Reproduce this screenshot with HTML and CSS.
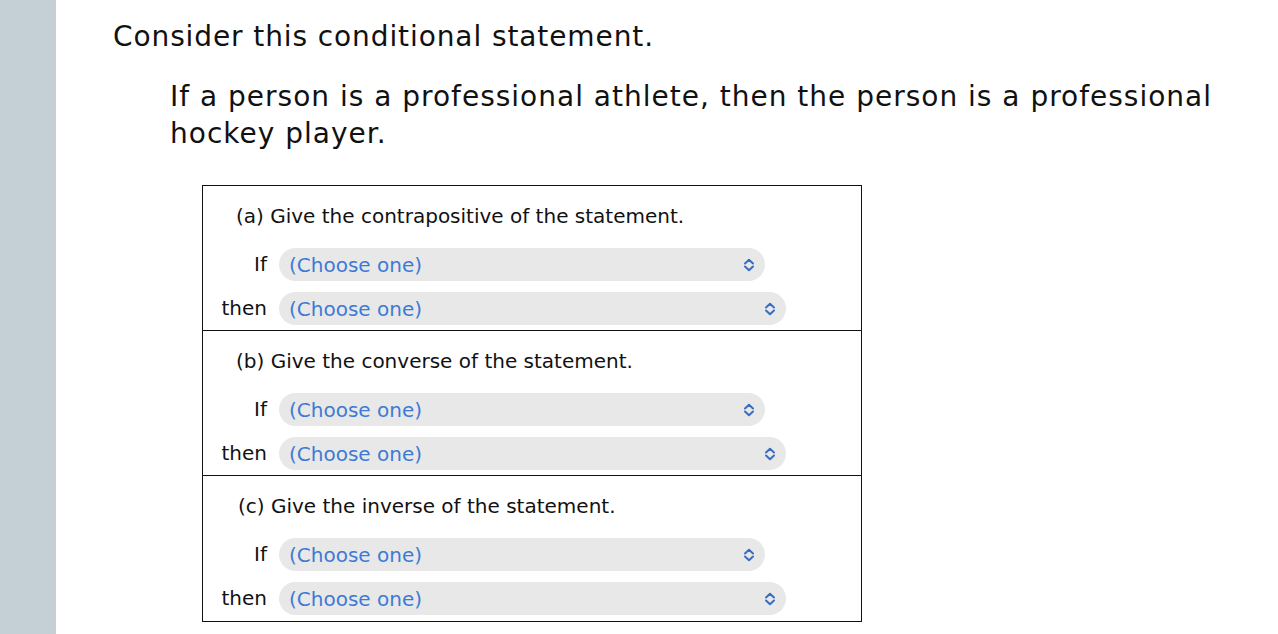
FILE: index.html
```html
<!DOCTYPE html>
<html>
<head>
<meta charset="utf-8">
<link rel="stylesheet" href="styles.css">
</head>
<body>
<div class="page">
  <div class="sidebar"></div>
  <div class="main">
    <p class="lead">Consider this conditional statement.</p>
    <p class="statement">If a person is a professional athlete, then the person is a professional hockey player.</p>
    <div class="box">
      <div class="section">
        <div class="title">(a) Give the contrapositive of the statement.</div>
        <div class="rows">
          <span class="lbl">If</span>
          <div class="sel short"><span>(Choose one)</span><svg class="chev" viewBox="0 0 12 14"><path d="M2 5.5 L6 1.8 L10 5.5 M2 8.5 L6 12.2 L10 8.5" fill="none" stroke="#3a6cc2" stroke-width="2" stroke-linecap="round" stroke-linejoin="round"/></svg></div>
          <span class="lbl">then</span>
          <div class="sel long"><span>(Choose one)</span><svg class="chev" viewBox="0 0 12 14"><path d="M2 5.5 L6 1.8 L10 5.5 M2 8.5 L6 12.2 L10 8.5" fill="none" stroke="#3a6cc2" stroke-width="2" stroke-linecap="round" stroke-linejoin="round"/></svg></div>
        </div>
      </div>
      <div class="section">
        <div class="title">(b) Give the converse of the statement.</div>
        <div class="rows">
          <span class="lbl">If</span>
          <div class="sel short"><span>(Choose one)</span><svg class="chev" viewBox="0 0 12 14"><path d="M2 5.5 L6 1.8 L10 5.5 M2 8.5 L6 12.2 L10 8.5" fill="none" stroke="#3a6cc2" stroke-width="2" stroke-linecap="round" stroke-linejoin="round"/></svg></div>
          <span class="lbl">then</span>
          <div class="sel long"><span>(Choose one)</span><svg class="chev" viewBox="0 0 12 14"><path d="M2 5.5 L6 1.8 L10 5.5 M2 8.5 L6 12.2 L10 8.5" fill="none" stroke="#3a6cc2" stroke-width="2" stroke-linecap="round" stroke-linejoin="round"/></svg></div>
        </div>
      </div>
      <div class="section">
        <div class="title c">(c) Give the inverse of the statement.</div>
        <div class="rows">
          <span class="lbl">If</span>
          <div class="sel short"><span>(Choose one)</span><svg class="chev" viewBox="0 0 12 14"><path d="M2 5.5 L6 1.8 L10 5.5 M2 8.5 L6 12.2 L10 8.5" fill="none" stroke="#3a6cc2" stroke-width="2" stroke-linecap="round" stroke-linejoin="round"/></svg></div>
          <span class="lbl">then</span>
          <div class="sel long"><span>(Choose one)</span><svg class="chev" viewBox="0 0 12 14"><path d="M2 5.5 L6 1.8 L10 5.5 M2 8.5 L6 12.2 L10 8.5" fill="none" stroke="#3a6cc2" stroke-width="2" stroke-linecap="round" stroke-linejoin="round"/></svg></div>
        </div>
      </div>
    </div>
  </div>
</div>
</body>
</html>
```

FILE: styles.css
```css
* { box-sizing: border-box; }
html, body { margin: 0; padding: 0; background: #fff; }
body {
  font-family: "DejaVu Sans", Verdana, sans-serif;
  color: #111;
  height: 634px;
  overflow: hidden;
}
.page { display: flex; height: 634px; }
.sidebar { width: 56px; flex: none; background: #c5d0d6; }
.main { flex: 1; padding: 17px 0 0 57px; }
.lead {
  margin: 0;
  font-size: 28px;
  letter-spacing: 0.9px;
  line-height: 40px;
}
.statement {
  margin: 21px 30px 0 57px;
  font-size: 28px;
  letter-spacing: 1px;
  line-height: 37px;
}
.box {
  margin: 33px 0 0 89px;
  width: 660px;
  border: 1.5px solid #111;
}
.section {
  padding: 16px 0 5px 18px;
}
.section + .section { border-top: 1.5px solid #111; }
.section:last-child { padding-bottom: 6px; }
.title {
  font-size: 20px;
  line-height: 28px;
  padding-left: 15px;
  margin-bottom: 18px;
}
.title.c { padding-left: 17px; }
.rows {
  display: grid;
  grid-template-columns: 46px auto;
  column-gap: 12px;
  row-gap: 11px;
  justify-items: start;
}
.lbl {
  justify-self: end;
  font-size: 20px;
  line-height: 33px;
}
.sel {
  display: flex;
  align-items: center;
  justify-content: space-between;
  height: 33px;
  border-radius: 17px;
  background: #e8e8e8;
  padding: 0 10px 0 10px;
  color: #3d7ad6;
  font-size: 20px;
}
.sel.short { width: 486px; }
.sel.long { width: 507px; }
.chev { width: 12px; height: 14px; }
```
